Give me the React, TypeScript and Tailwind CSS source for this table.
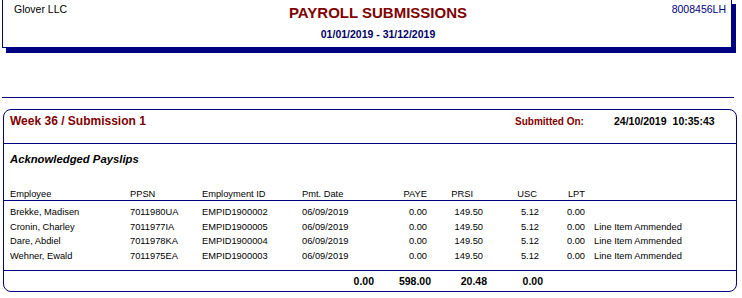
const rows = [
  { name: "Brekke, Madisen", ppsn: "7011980UA", id: "EMPID1900002", note: "" },
  { name: "Cronin, Charley", ppsn: "7011977IA", id: "EMPID1900005", note: "Line Item Ammended" },
  { name: "Dare, Abdiel", ppsn: "7011978KA", id: "EMPID1900004", note: "Line Item Ammended" },
  { name: "Wehner, Ewald", ppsn: "7011975EA", id: "EMPID1900003", note: "Line Item Ammended" },
];

export default function App() {
  return (
    <div className="w-[742px] h-[298px] bg-white overflow-hidden text-black font-['Liberation_Sans',Arial,sans-serif]">
      {/* report header, the navy block behind it is the drop shadow */}
      <div className="flex ml-[6px] mt-[4px] w-[730px] h-[49px] bg-[#000080]">
        <div className="flex flex-none -ml-[4px] -mt-[5px] w-[730px] h-[49px] bg-white border border-[#000080]">
          <div className="w-[172px] pl-[11px] pt-[3px] text-[10.5px] leading-[12px]">Glover LLC</div>
          <div className="flex-1 text-center">
            <div className="mt-[4px] text-[15px] leading-[18px] font-bold text-[#800000]">PAYROLL SUBMISSIONS</div>
            <div className="mt-[6px] text-[10.5px] leading-[12px] font-bold text-[#000066]">01/01/2019 - 31/12/2019</div>
          </div>
          <div className="w-[150px] pr-[5px] pt-[3px] text-right text-[10.5px] leading-[12px] text-[#000080]">8008456LH</div>
        </div>
      </div>

      <div className="mt-[44px] ml-[2px] w-[732px] h-px bg-[#000080]" />

      {/* submission box */}
      <div className="mt-[11px] ml-[3px] w-[734px] h-[183px] border border-[#000080] rounded-[8px]">
        <div className="h-[34px] border-b border-[#000080] flex items-baseline pt-[4px] pl-[6px] pr-[18px]">
          <div className="text-[12px] leading-[14px] font-bold text-[#800000]">Week 36 / Submission 1</div>
          <div className="ml-auto w-[99px] text-[10px] font-bold text-[#800000]">Submitted On:</div>
          <div className="w-[104px] text-[10.5px] font-bold">
            24/10/2019<span className="ml-[6px]">10:35:43</span>
          </div>
        </div>

        <div className="h-[57px] border-b border-[#000080] pl-[6px]">
          <div className="pt-[9px] text-[11.3px] leading-[13px] font-bold italic">Acknowledged Payslips</div>
          <div className="mt-[21px] flex text-[9.3px] leading-[14.67px]">
            <div className="w-[120px]">Employee</div>
            <div className="w-[72px]">PPSN</div>
            <div className="w-[100px]">Employment ID</div>
            <div className="w-[78px]">Pmt. Date</div>
            <div className="w-[47px] text-right">PAYE</div>
            <div className="w-[56px] text-right pr-[10px]">PRSI</div>
            <div className="w-[56px] text-right pr-[2px]">USC</div>
            <div className="w-[46px] text-right">LPT</div>
          </div>
        </div>

        <div className="h-[70px] border-b border-[#000080] pl-[6px] pt-[4px]">
          {rows.map((r) => (
            <div key={r.id} className="flex text-[9.3px] leading-[14.67px]">
              <div className="w-[120px]">{r.name}</div>
              <div className="w-[72px]">{r.ppsn}</div>
              <div className="w-[100px]">{r.id}</div>
              <div className="w-[78px]">06/09/2019</div>
              <div className="w-[47px] text-right">0.00</div>
              <div className="w-[56px] text-right">149.50</div>
              <div className="w-[56px] text-right">5.12</div>
              <div className="w-[46px] text-right">0.00</div>
              <div className="pl-[9px]">{r.note}</div>
            </div>
          ))}
        </div>

        <div className="flex pl-[6px] text-[10.5px] leading-[20px] font-bold">
          <div className="w-[364px] text-right">0.00</div>
          <div className="w-[57px] text-right">598.00</div>
          <div className="w-[56px] text-right">20.48</div>
          <div className="w-[56px] text-right">0.00</div>
        </div>
      </div>
    </div>
  );
}
